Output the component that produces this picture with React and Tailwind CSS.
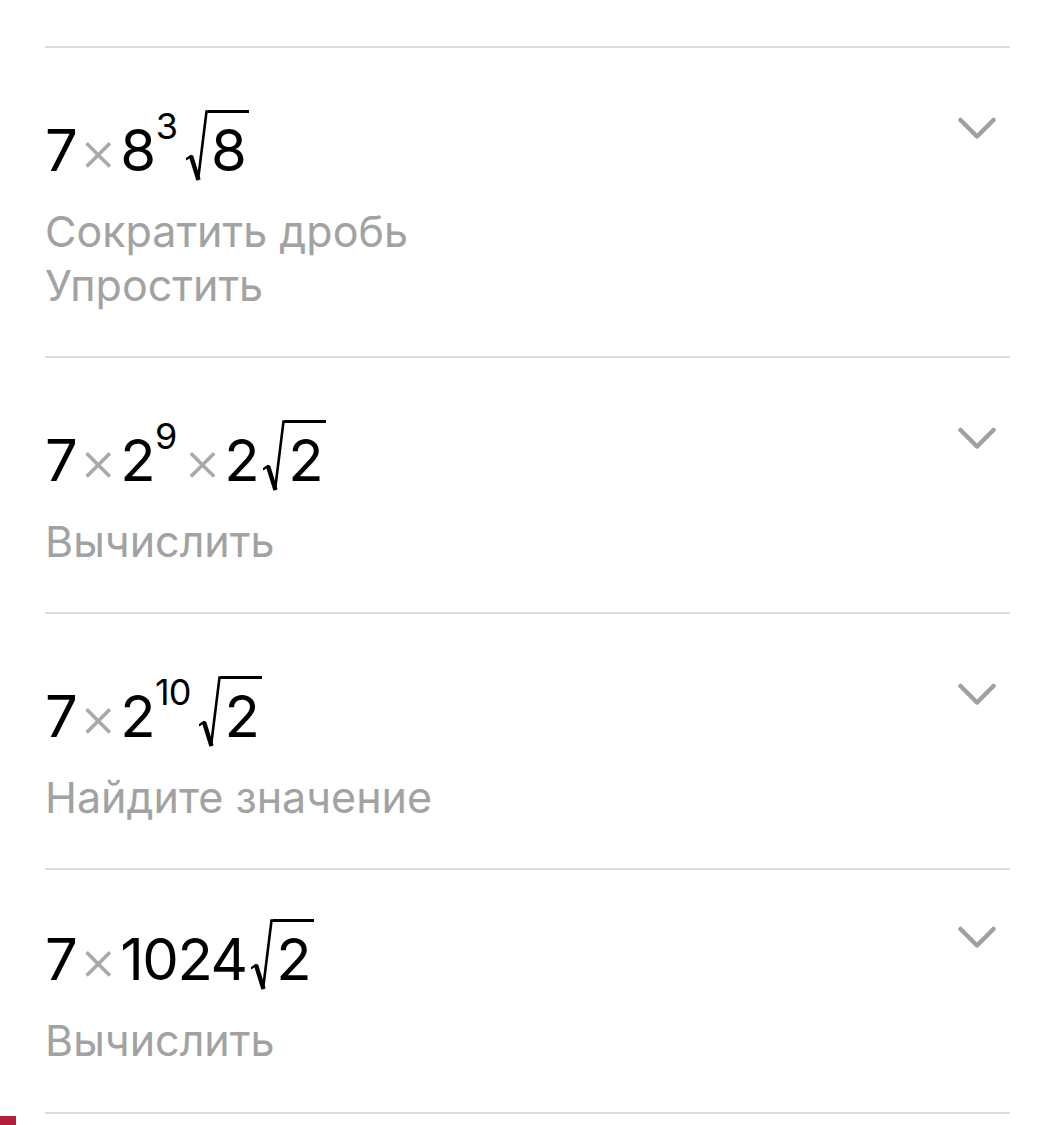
import React from "react";

const FONT = { fontFamily: 'Inter, "Noto Sans", "Liberation Sans", sans-serif' };

function Times() {
  return (
    <span className="text-[#a9a9a9] text-[58px] font-light mx-[3px]">×</span>
  );
}

function Sup({ v }) {
  return (
    <span className="self-start text-[36px] leading-[30px] mt-[1px] ml-[1px] mr-[4px] tracking-[-1px]">{v}</span>
  );
}

function Sqrt({ v }) {
  return (
    <span className="self-start flex ml-[5px]">
      <svg width="22" height="72" viewBox="0 0 22 72" className="block">
        <path d="M0.5 49 L5 46" stroke="#000" strokeWidth="2.2" fill="none" strokeLinecap="round" />
        <path d="M5 46 L12.5 70" stroke="#000" strokeWidth="4.4" fill="none" strokeLinecap="butt" />
        <path d="M12 70 L20.5 1.5 L22 1.5" stroke="#000" strokeWidth="2.6" fill="none" strokeLinejoin="miter" />
      </svg>
      <span className="border-t-[3px] border-black h-[80px] leading-[74px] pl-[3px] pr-[2px]">{v}</span>
    </span>
  );
}

function Expr({ tokens }) {
  return (
    <div className="flex items-baseline h-[80px] text-[58px] leading-[80px] text-black">
      {tokens.map((t, i) => {
        if (t.k === "x") return <Times key={i} />;
        if (t.k === "sup") return <Sup key={i} v={t.v} />;
        if (t.k === "sqrt") return <Sqrt key={i} v={t.v} />;
        return (
          <span key={i} className="tracking-[-1.5px]">
            {t.v}
          </span>
        );
      })}
    </div>
  );
}

function Chevron() {
  return (
    <svg width="38" height="24" viewBox="0 0 38 24" className="block">
      <polyline
        points="2.5,3 19,19.5 35.5,3"
        fill="none"
        stroke="#a0a0a0"
        strokeWidth="4.5"
        strokeLinecap="round"
        strokeLinejoin="round"
      />
    </svg>
  );
}

function Row({ tokens, subs, top, last }) {
  return (
    <div
      className={
        "flex justify-between border-t-2 border-[#dedede] " +
        (top === "short" ? "pt-[49px]" : "pt-[62px]") +
        (last ? " border-b-2 pb-[45px]" : " pb-[44px]")
      }
    >
      <div>
        <Expr tokens={tokens} />
        <div className="mt-[14px] text-[43px] leading-[54px] text-[#a2a2a2]">
          {subs.map((s, i) => (
            <div key={i}>{s}</div>
          ))}
        </div>
      </div>
      <div className="mt-[7px] mr-[14px]">
        <Chevron />
      </div>
    </div>
  );
}

const n = (v) => ({ k: "n", v });
const X = { k: "x" };
const sup = (v) => ({ k: "sup", v });
const sq = (v) => ({ k: "sqrt", v });

export default function App() {
  return (
    <div className="relative w-[1056px] h-[1125px] bg-white overflow-hidden" style={FONT}>
      <div className="pt-[46px] ml-[45px] mr-[46px]">
        <Row tokens={[n("7"), X, n("8"), sup("3"), sq("8")]} subs={["Сократить дробь", "Упростить"]} />
        <Row tokens={[n("7"), X, n("2"), sup("9"), X, n("2"), sq("2")]} subs={["Вычислить"]} />
        <Row tokens={[n("7"), X, n("2"), sup("10"), sq("2")]} subs={["Найдите значение"]} />
        <Row tokens={[n("7"), X, n("1024"), sq("2")]} subs={["Вычислить"]} top="short" last />
      </div>
      <div className="absolute left-0 bottom-0 w-[16px] h-[9px] bg-[#b21f3d]" />
    </div>
  );
}
